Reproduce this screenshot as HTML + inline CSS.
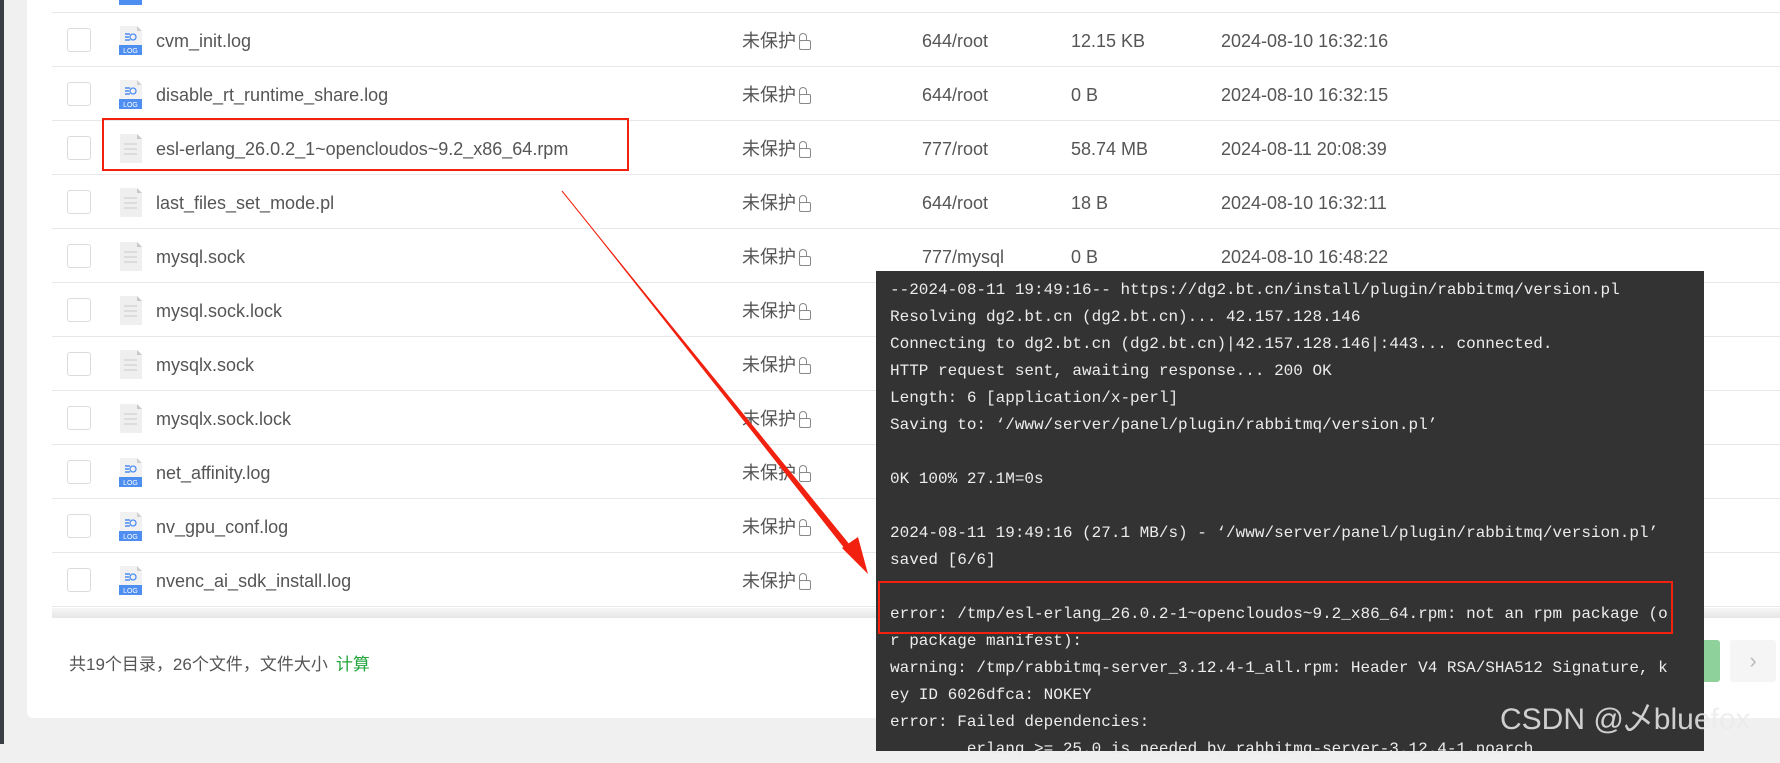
<!DOCTYPE html>
<html><head><meta charset="utf-8"><style>
*{margin:0;padding:0;box-sizing:border-box}
body{width:1780px;height:744px;overflow:hidden;background:#f0f0f0;position:relative;font-family:"Liberation Sans","Noto Sans CJK SC",sans-serif;color:#555}
.strip{position:absolute;left:0;top:0;width:4px;height:744px;background:#3a3e45}
.card{position:absolute;left:27px;top:-10px;width:1780px;height:728px;background:#fff;border-radius:6px}
.row{position:absolute;left:52px;width:1740px;height:54px;border-bottom:1px solid #e8e8e8}
.cb{position:absolute;left:15px;top:15px;width:24px;height:24px;border:1px solid #dcdcdc;border-radius:3px;background:#fff}
.ic{position:absolute;left:67px;top:13px;width:23px;height:29px}
.t{position:absolute;top:1px;line-height:54px;font-size:18px;color:#555;white-space:nowrap}
.lock{display:inline-block;width:12px;height:10px;border:1.5px solid #888;border-radius:2px;margin-left:3px;position:relative;top:3px}
.lock:before{content:"";position:absolute;left:-1px;top:-8px;width:6px;height:7px;border:1.5px solid #888;border-bottom:none;border-radius:4px 4px 0 0}
.band{position:absolute;left:52px;top:608px;width:1740px;height:10px;background:linear-gradient(#f6f6f6,#e6e6e6)}
.foot{position:absolute;left:69px;top:650px;font-size:17px;color:#555}
.foot span{color:#20a53a;margin-left:8px}
.term{position:absolute;left:876px;top:271px;width:828px;height:480px;background:#333;color:#ececec;font-family:"Liberation Mono",monospace;font-size:16px;line-height:27px;padding:6px 0 0 14px;white-space:pre}
.red{position:absolute;border:2.5px solid #f2200e}
.wm{position:absolute;left:1500px;top:694px;font-size:30px;color:rgba(235,235,235,.85);white-space:nowrap;font-family:"Liberation Sans","Noto Sans CJK SC",sans-serif}
</style></head><body>
<div class="strip"></div>
<div class="card"></div>
<div style="position:absolute;left:52px;top:0;width:1740px;height:13px;border-bottom:1px solid #e8e8e8"></div>
<div style="position:absolute;left:119px;top:0;width:23px;height:5px;background:#4d8ef0"></div>

<svg width="0" height="0" style="position:absolute">
<defs>
<symbol id="log" viewBox="0 0 23 29"><path d="M1 0h17l5 5v24H1z" fill="#f1f1f1"/><path d="M18 0v5h5z" fill="#cfcfcf"/><path d="M6 8h5M6 11h4M6 14h5" stroke="#4d8ef0" stroke-width="1.4"/><circle cx="14" cy="11" r="3" fill="none" stroke="#4d8ef0" stroke-width="1.3"/><rect x="0" y="19" width="23" height="10" fill="#4d8ef0"/><text x="11.5" y="27" font-size="7" fill="#fff" text-anchor="middle" font-family="Liberation Sans">LOG</text></symbol>
<symbol id="doc" viewBox="0 0 23 29"><path d="M1 0h17l5 5v24H1z" fill="#efefef"/><path d="M18 0v5h5z" fill="#c8c8c8"/><path d="M5 10h13M5 15h13M5 20h13" stroke="#d6d6d6" stroke-width="1.6"/></symbol>
</defs></svg>

<div class="row" style="top:13px"><div class="cb"></div><svg class="ic"><use href="#log"/></svg><div class="t" style="left:104px">cvm_init.log</div><div class="t" style="left:690px">未保护<i class="lock"></i></div><div class="t" style="left:870px">644/root</div><div class="t" style="left:1019px">12.15 KB</div><div class="t" style="left:1169px">2024-08-10 16:32:16</div></div>
<div class="row" style="top:67px"><div class="cb"></div><svg class="ic"><use href="#log"/></svg><div class="t" style="left:104px">disable_rt_runtime_share.log</div><div class="t" style="left:690px">未保护<i class="lock"></i></div><div class="t" style="left:870px">644/root</div><div class="t" style="left:1019px">0 B</div><div class="t" style="left:1169px">2024-08-10 16:32:15</div></div>
<div class="row" style="top:121px"><div class="cb"></div><svg class="ic"><use href="#doc"/></svg><div class="t" style="left:104px">esl-erlang_26.0.2_1~opencloudos~9.2_x86_64.rpm</div><div class="t" style="left:690px">未保护<i class="lock"></i></div><div class="t" style="left:870px">777/root</div><div class="t" style="left:1019px">58.74 MB</div><div class="t" style="left:1169px">2024-08-11 20:08:39</div></div>
<div class="row" style="top:175px"><div class="cb"></div><svg class="ic"><use href="#doc"/></svg><div class="t" style="left:104px">last_files_set_mode.pl</div><div class="t" style="left:690px">未保护<i class="lock"></i></div><div class="t" style="left:870px">644/root</div><div class="t" style="left:1019px">18 B</div><div class="t" style="left:1169px">2024-08-10 16:32:11</div></div>
<div class="row" style="top:229px"><div class="cb"></div><svg class="ic"><use href="#doc"/></svg><div class="t" style="left:104px">mysql.sock</div><div class="t" style="left:690px">未保护<i class="lock"></i></div><div class="t" style="left:870px">777/mysql</div><div class="t" style="left:1019px">0 B</div><div class="t" style="left:1169px">2024-08-10 16:48:22</div></div>
<div class="row" style="top:283px"><div class="cb"></div><svg class="ic"><use href="#doc"/></svg><div class="t" style="left:104px">mysql.sock.lock</div><div class="t" style="left:690px">未保护<i class="lock"></i></div></div>
<div class="row" style="top:337px"><div class="cb"></div><svg class="ic"><use href="#doc"/></svg><div class="t" style="left:104px">mysqlx.sock</div><div class="t" style="left:690px">未保护<i class="lock"></i></div></div>
<div class="row" style="top:391px"><div class="cb"></div><svg class="ic"><use href="#doc"/></svg><div class="t" style="left:104px">mysqlx.sock.lock</div><div class="t" style="left:690px">未保护<i class="lock"></i></div></div>
<div class="row" style="top:445px"><div class="cb"></div><svg class="ic"><use href="#log"/></svg><div class="t" style="left:104px">net_affinity.log</div><div class="t" style="left:690px">未保护<i class="lock"></i></div></div>
<div class="row" style="top:499px"><div class="cb"></div><svg class="ic"><use href="#log"/></svg><div class="t" style="left:104px">nv_gpu_conf.log</div><div class="t" style="left:690px">未保护<i class="lock"></i></div></div>
<div class="row" style="top:553px"><div class="cb"></div><svg class="ic"><use href="#log"/></svg><div class="t" style="left:104px">nvenc_ai_sdk_install.log</div><div class="t" style="left:690px">未保护<i class="lock"></i></div></div>
<div class="band"></div>
<div class="foot">共19个目录，26个文件，文件大小<span>计算</span></div>

<div style="position:absolute;left:1690px;top:640px;width:30px;height:42px;background:#8fd19a;border-radius:3px"></div>
<div style="position:absolute;left:1730px;top:640px;width:46px;height:42px;background:#f5f5f5;border-radius:3px;color:#bbb;font-size:22px;text-align:center;line-height:42px">›</div>

<div class="term">--2024-08-11 19:49:16-- https://dg2.bt.cn/install/plugin/rabbitmq/version.pl
Resolving dg2.bt.cn (dg2.bt.cn)... 42.157.128.146
Connecting to dg2.bt.cn (dg2.bt.cn)|42.157.128.146|:443... connected.
HTTP request sent, awaiting response... 200 OK
Length: 6 [application/x-perl]
Saving to: ‘/www/server/panel/plugin/rabbitmq/version.pl’

0K 100% 27.1M=0s

2024-08-11 19:49:16 (27.1 MB/s) - ‘/www/server/panel/plugin/rabbitmq/version.pl’
saved [6/6]

error: /tmp/esl-erlang_26.0.2-1~opencloudos~9.2_x86_64.rpm: not an rpm package (o
r package manifest):
warning: /tmp/rabbitmq-server_3.12.4-1_all.rpm: Header V4 RSA/SHA512 Signature, k
ey ID 6026dfca: NOKEY
error: Failed dependencies:
        erlang >= 25.0 is needed by rabbitmq-server-3.12.4-1.noarch</div>

<div class="red" style="left:102px;top:118px;width:527px;height:53px"></div>
<div class="red" style="left:878px;top:581px;width:795px;height:53px"></div>
<svg style="position:absolute;left:0;top:0" width="1780" height="744">
<path d="M562 191 L856 556" stroke="#f2200e" stroke-width="1" fill="none"/>
<path d="M562 191 L850 545 L845 549 Z" fill="#f2200e"/>
<path d="M868 574 L842 548 L858 537 Z" fill="#f2200e"/>
</svg>
<div class="wm">CSDN @乄bluefox</div>
</body></html>
